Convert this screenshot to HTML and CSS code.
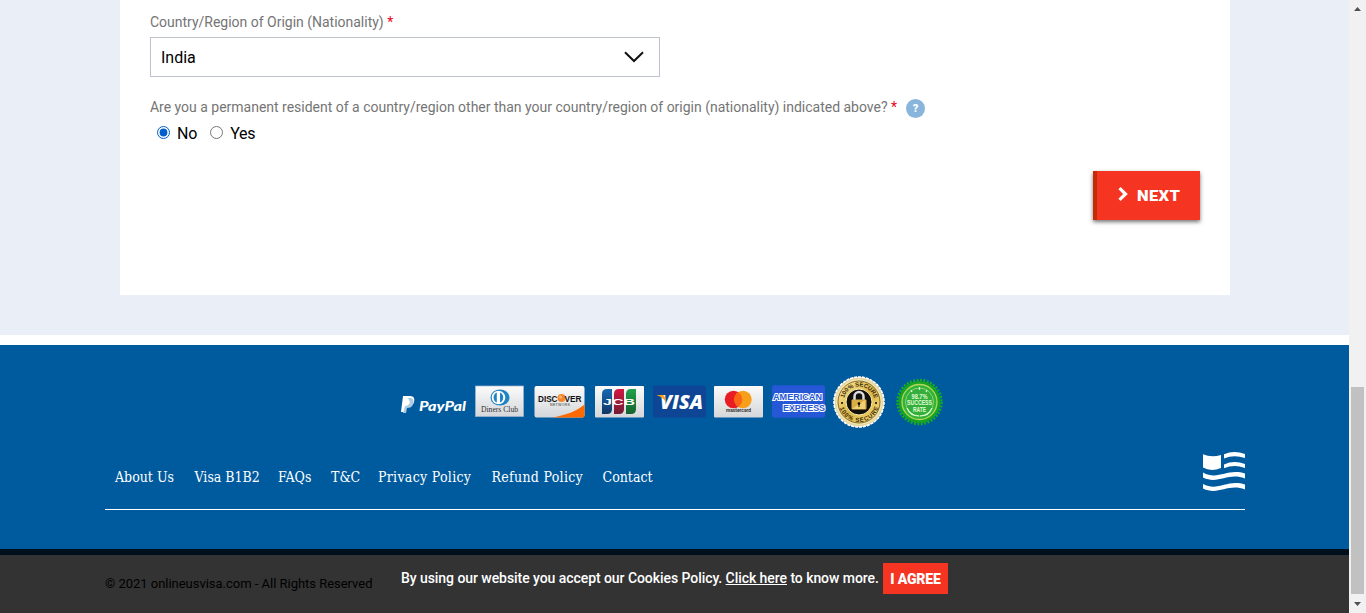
FILE: index.html
```html
<!DOCTYPE html>
<html lang="en">
<head>
<meta charset="utf-8">
<title>Online US Visa</title>
<link rel="stylesheet" href="styles.css">
</head>
<body>
<div class="viewport">
  <div class="page">
    <main class="form-area">
      <form class="card">
        <div class="label">Country/Region of Origin (Nationality) <span class="req">*</span></div>
        <div class="select"><span>India</span>
          <svg width="20" height="12" viewBox="0 0 20 12"><path d="M1 1.2L10 10L19 1.2" fill="none" stroke="#111" stroke-width="2"/></svg>
        </div>
        <div class="label question"><span class="question-text">Are you a permanent resident of a country/region other than your country/region of origin (nationality) indicated above? <span class="req">*</span></span><span class="help">?</span></div>
        <div class="radios">
          <label><input type="radio" name="resident" checked><span>No</span></label>
          <label><input type="radio" name="resident"><span>Yes</span></label>
        </div>
        <button class="next" type="button">
          <svg width="10" height="14" viewBox="0 0 10 14"><path d="M1.5 1.2L7.5 7L1.5 12.8" fill="none" stroke="#fff" stroke-width="3.2"/></svg>
          <span>NEXT</span>
        </button>
      </form>
    </main>
    <footer class="footer">
      <svg class="payments" width="544" height="54" viewBox="400 375 544 54">
        <defs>
          <linearGradient id="silver" x2="0" y2="1"><stop stop-color="#fbfbfb"/><stop offset="1" stop-color="#d4d6d9"/></linearGradient>
          <linearGradient id="gold" x2="1" y2="1"><stop stop-color="#fff0a2"/><stop offset=".5" stop-color="#dcb546"/><stop offset="1" stop-color="#f8df7a"/></linearGradient>
          <linearGradient id="jb" x2="0" y2="1"><stop stop-color="#1768b2"/><stop offset="1" stop-color="#103765"/></linearGradient>
          <linearGradient id="jr" x2="0" y2="1"><stop stop-color="#d21842"/><stop offset="1" stop-color="#721c35"/></linearGradient>
          <linearGradient id="jg" x2="0" y2="1"><stop stop-color="#20a34c"/><stop offset="1" stop-color="#16612f"/></linearGradient>
          <path id="arc-top" d="M843.500 402A15.500 15.500 0 0 1 874.500 402"/>
          <path id="arc-bottom" d="M839 402A20 20 0 0 0 879 402"/>
        </defs>
        <g>
          <path d="M403 396h7c4 0 5 3 4 6-1 4-4 5-8 5l-1 5h-4z" fill="#fff"/>
          <path d="M408 398h3c3 1 3 4 2 6-1 3-3 4-6 4l-1 5h-3l2-7q4 0 5-4z" fill="#a9cbe4"/>
          <text x="419" y="411" class="paypal" textLength="47" lengthAdjust="spacingAndGlyphs">PayPal</text>
        </g>
        <g>
          <rect x="475.500" y="386" width="48" height="30.500" fill="url(#silver)" stroke="#9eb7d1" stroke-width=".7"/>
          <ellipse cx="500" cy="397.500" rx="9.500" ry="8" fill="#2184c2"/><circle cx="498.500" cy="397.500" r="6.800" fill="#fff"/>
          <path d="M496.800 392.500a5.500 5.500 0 0 0 0 10zM500 392.500a5.500 5.500 0 0 1 0 10z" fill="#2184c2"/>
          <text x="481" y="411.500" class="diners" textLength="37" lengthAdjust="spacingAndGlyphs">Diners Club</text>
        </g>
        <g>
          <rect x="534.500" y="386" width="50" height="31.500" rx="2" fill="url(#silver)"/>
          <path d="M552 417.500c13-2 24-6 32.500-13v11q0 2-2 2z" fill="#ff6900"/>
          <circle cx="561.500" cy="398" r="4" fill="#f5852a"/><circle cx="560.500" cy="397" r="1.500" fill="#ffb574"/>
          <text x="538" y="401.500" class="discover" textLength="19.500" lengthAdjust="spacingAndGlyphs">DISC</text><text x="564.500" y="401.500" class="discover" textLength="17" lengthAdjust="spacingAndGlyphs">VER</text>
          <text x="550" y="406.300" class="network" textLength="20">NETWORK</text>
        </g>
        <g>
          <rect x="595" y="386" width="49" height="31.500" rx="1" fill="url(#silver)"/>
          <path d="M607 389h5v20q0 5-5 5h-5v-20q0-5 5-5z" fill="url(#jb)"/><path d="M619 389h5v20q0 5-5 5h-5v-20q0-5 5-5z" fill="url(#jr)"/><path d="M631 389h5v20q0 5-5 5h-5v-20q0-5 5-5z" fill="url(#jg)"/>
          <text x="603" y="405" class="jcb" textLength="32" lengthAdjust="spacingAndGlyphs">JCB</text>
        </g>
        <g>
          <rect x="653" y="385.500" width="53" height="32" rx="2" fill="#0e4595"/>
          <text x="660" y="408.500" class="visa" textLength="43" lengthAdjust="spacingAndGlyphs">VISA</text>
          <path d="M656.500 395h6q2 0 2.300 2l1 5q-3-5-9.300-7z" fill="#f9a51a"/>
        </g>
        <g>
          <rect x="714" y="386" width="49" height="31.500" rx="1" fill="url(#silver)"/>
          <circle cx="733.500" cy="399.500" r="8.700" fill="#e91c24"/><circle cx="743" cy="399.500" r="8.700" fill="#f79e1b"/>
          <path d="M738.250 392.200a8.700 8.700 0 0 1 0 14.600a8.700 8.700 0 0 1 0-14.600" fill="#fb6615"/>
          <text x="726" y="412" class="mastercard" textLength="25" lengthAdjust="spacingAndGlyphs">mastercard</text>
        </g>
        <g>
          <rect x="772" y="385.300" width="53" height="32.500" rx="2" fill="#2557d6"/>
          <text x="773" y="399.800" class="amex" textLength="49" lengthAdjust="spacingAndGlyphs">AMERICAN</text><text x="783" y="410.500" class="amex" textLength="42" lengthAdjust="spacingAndGlyphs">EXPRESS</text>
        </g>
        <g>
          <circle cx="859" cy="402" r="25.200" fill="#e3d6a8"/><circle cx="859" cy="402" r="25" fill="none" stroke="#fff" stroke-width="1.600" stroke-dasharray="3 1"/>
          <circle cx="859" cy="402" r="22.800" fill="#f5e6ac"/><circle cx="859" cy="402" r="21" fill="url(#gold)" stroke="#6b521a" stroke-width=".8"/>
          <circle cx="859" cy="402" r="13" fill="#11100d" stroke="#fff1ac"/>
          <path d="M854.500 400v-3.500a4.500 4.500 0 0 1 9 0v3.500" fill="none" stroke="#ddd" stroke-width="2.500"/><rect x="851.500" y="399.500" width="15" height="10" rx="1" fill="#d9ad45"/><path d="M852 409l13-9v9z" fill="#f0cf75"/><circle cx="859" cy="403.500" r="1.300"/><path d="M858.500 404h1v3h-1z"/>
          <text class="seal"><textPath href="#arc-top" startOffset="4" textLength="41">100% SECURE</textPath></text><text class="seal"><textPath href="#arc-bottom" startOffset="6" textLength="51">100% SECURE</textPath></text>
          <circle cx="842" cy="403" r="1"/><circle cx="876" cy="403" r="1"/>
        </g>
        <g>
          <circle cx="919.500" cy="402" r="21" fill="#18a322"/><circle cx="919.500" cy="402" r="22" fill="none" stroke="#17aa27" stroke-width="2.500" stroke-dasharray="2 1.450"/>
          <circle cx="919.500" cy="402" r="17.500" fill="#31b337" stroke="#b5d65c" stroke-width="1.300"/><circle cx="919.500" cy="402" r="14" fill="#35ae3d" stroke="#8bd474" stroke-width="1"/>
          <path d="M911 390l1 2M919.500 387v3M927 390l-1 2M907 408q3 8 12 8M932 408q-3 8-12 8" stroke="#dcffd0" stroke-width="1.200" fill="none"/>
          <g class="success"><text x="919.500" y="398.500" textLength="16" lengthAdjust="spacingAndGlyphs">98.7%</text><text x="919.500" y="405" textLength="25" lengthAdjust="spacingAndGlyphs">SUCCESS</text><text x="919.500" y="411.500" textLength="13" lengthAdjust="spacingAndGlyphs">RATE</text></g>
        </g>
      </svg>
      <div class="footer-row">
        <nav class="links"><a>About Us</a><a>Visa B1B2</a><a>FAQs</a><a>T&amp;C</a><a class="wide">Privacy Policy</a><a class="wide">Refund Policy</a><a>Contact</a></nav>
        <svg class="flag" width="42" height="40" viewBox="0 0 42 40"><g fill="#fff"><path d="M0 2.200Q8 5.700 18 3v13Q8 20 0 15.500z"/><path d="M21 2.200Q31-2 42 2v4Q31 2.200 21 6.500zM21 12.500Q31 8 42 12v4Q31 12 21 16.300zM0 20.500C15 29 24 16 42 21.500v5C25 20 15 33 0 25.500zM0 32C15 40 24 27 42 32.500v5C25 31 15 44 0 36.500z"/></g></svg>
      </div>
    </footer>
    <div class="bottom">
      <span class="copyright">© 2021 onlineusvisa.com - All Rights Reserved</span>
      <div class="cookies"><span class="cookie-text">By using our website you accept our Cookies Policy. <a>Click here</a> to know more.</span><button type="button">I AGREE</button></div>
    </div>
  </div>
  <div class="scrollbar">
    <svg width="7" height="4" viewBox="0 0 7 4"><path d="M0 4L3.500 0L7 4z" fill="#505050"/></svg>
    <div class="thumb"></div>
    <svg width="7" height="4" viewBox="0 0 7 4"><path d="M0 0H7L3.500 4z" fill="#505050"/></svg>
  </div>
</div>
</body>
</html>
```
FILE: styles.css
```css
* { box-sizing: border-box; }
body { margin: 0; font-family: Roboto, sans-serif; overflow: hidden; background: #fff; }
.viewport { display: flex; width: 1366px; height: 613px; }
.page { width: 1349px; display: flex; flex-direction: column; }
.form-area { height: 335px; background: #e9eef7; padding-left: 120px; }
.card { width: 1110px; height: 295px; background: #fff; padding: 14px 30px 0; display: flex; flex-direction: column; }
.label { font-size: 14px; line-height: 16px; color: #757575; white-space: nowrap; letter-spacing: -.01px; }
.req { color: #f00020; }
.select { width: 510px; height: 40px; margin-top: 7px; padding: 0 15px 0 10px; border: 1px solid #bdc2cd; display: flex; align-items: center; justify-content: space-between; font-size: 16px; color: #000; }
.question { display: flex; align-items: center; height: 20px; margin-top: 21px; gap: 9px; }
.question-text { padding-bottom: 3px; }
.help { width: 19px; height: 19px; border-radius: 50%; background: #87b5dc; color: #fff; font-size: 11px; font-weight: 900; line-height: 19px; text-align: center; }
.radios { display: flex; margin: 4px 0 0 7px; gap: 13px; font-size: 16px; line-height: 20px; letter-spacing: -.2px; }
.radios label { display: flex; align-items: center; gap: 7px; }
.radios span { padding-top: 2px; margin-bottom: -2px; }
.radios input { width: 13px; height: 13px; margin: 0; accent-color: #005fcc; }
.next { align-self: flex-end; width: 107px; height: 49px; margin-top: 29px; padding: 0 0 0 21px; display: flex; align-items: center; gap: 9px; border: 0; border-left: 4px solid #c42b08; background: #f53422; color: #fff; font: 900 14px Roboto, sans-serif; letter-spacing: .3px; box-shadow: 0 2px 4px rgba(0,0,0,.55); }
.next svg { margin-bottom: 3px; }
.next span { padding-top: 1px; transform: scaleX(1.18); transform-origin: left; }
.footer { height: 204px; margin-top: 10px; padding: 30px 104px 0 105px; background: #005a9e; display: flex; flex-direction: column; }
.payments { margin-left: 295px; }
.footer-row { display: flex; justify-content: space-between; height: 81px; border-bottom: 1px solid #fff; padding-left: 10px; }
.links { display: grid; grid-template-columns: 79.5px 83.5px 53px 47px 113.5px 111px 60px; padding-top: 39px; color: #fff; font: 14px/18px "DejaVu Serif Condensed", "DejaVu Serif", serif; white-space: nowrap; }
.links .wide { letter-spacing: .3px; }
.flag { margin-top: 23px; }
.bottom { flex: 0 0 64px; display: flex; border-top: 6px solid #000f1c; background: #333; padding-left: 105px; }
.copyright { width: 296px; padding-top: 20px; color: #000; font-size: 13px; line-height: 17px; letter-spacing: -.02px; white-space: nowrap; }
.cookies { display: flex; align-items: flex-start; padding-top: 8px; color: #fff; font-weight: 500; font-size: 14px; line-height: 31px; }
.cookie-text { width: 482px; white-space: nowrap; letter-spacing: -.06px; }
.cookies a { text-decoration: underline; }
.cookies button { width: 65px; height: 31px; padding: 0; border: 0; background: #f53422; color: #fff; font: 900 14px Roboto, sans-serif; letter-spacing: -.15px; }
.scrollbar { width: 17px; background: #f1f1f1; display: flex; flex-direction: column; align-items: center; padding-top: 7px; }
.thumb { width: 13px; height: 207px; margin: 376px 0 8px; background: #c1c1c1; }
.paypal { font: italic 900 14px Lato, sans-serif; fill: #fff; }
.diners { font: 8px "Liberation Serif", serif; fill: #333; }
.discover { font: bold 9.5px "Liberation Sans", sans-serif; fill: #111; }
.network { font: 3.5px "Liberation Sans", sans-serif; fill: #333; }
.jcb { font: bold 9.5px "Liberation Sans", sans-serif; fill: #fff; }
.visa { font: italic 800 19px "Open Sans", sans-serif; fill: #fff; }
.mastercard { font: bold 4.5px Roboto, sans-serif; fill: #333; }
.amex { font: bold 9.5px "Liberation Sans", sans-serif; fill: #2557d6; stroke: #fff; stroke-width: 2px; paint-order: stroke; }
.seal { font: bold 6px "Liberation Sans", sans-serif; fill: #382a0d; }
.success { font: bold 6.5px "Liberation Sans", sans-serif; fill: #e0ffd4; text-anchor: middle; }
```
